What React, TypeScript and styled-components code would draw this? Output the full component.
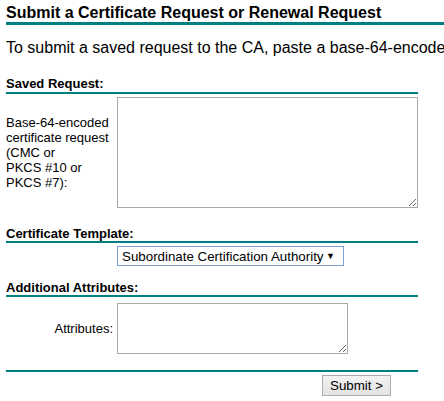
import React from "react";
import styled, { createGlobalStyle } from "styled-components";

const Global = createGlobalStyle`
  html, body {
    margin: 0;
    padding: 0;
    overflow: hidden;
    background: #ffffff;
  }
  body {
    font-family: "Liberation Sans", Arial, sans-serif;
    color: #000000;
  }
`;

const Page = styled.div`
  display: flex;
  flex-direction: column;
  padding: 4px 0 0 6px;
`;

const Title = styled.h1`
  margin: 0;
  font-size: 16px;
  line-height: 18px;
  font-weight: bold;
  white-space: nowrap;
  border-bottom: 3px solid #008080;
`;

const Intro = styled.p`
  margin: 14px 0 0 0;
  font-size: 16px;
  line-height: 18px;
  white-space: nowrap;
`;

const Form = styled.form`
  display: flex;
  flex-direction: column;
  width: 412px;
`;

const SectionHead = styled.div<{ $top: number }>`
  margin-top: ${(p) => p.$top}px;
  font-size: 13px;
  line-height: 15px;
  font-weight: bold;
  padding-bottom: ${(p) => (p.$top > 18 ? 1 : 0)}px;
  border-bottom: 2px solid #008080;
`;

const Row = styled.div<{ $top: number }>`
  display: grid;
  grid-template-columns: 111px auto;
  align-items: center;
  margin-top: ${(p) => p.$top}px;
`;

const Label = styled.div<{ $right?: boolean }>`
  font-size: 13px;
  line-height: 15px;
  padding-right: 4px;
  text-align: ${(p) => (p.$right ? "right" : "left")};
`;

const Area = styled.textarea<{ $w: number; $h: number }>`
  box-sizing: border-box;
  width: ${(p) => p.$w}px;
  height: ${(p) => p.$h}px;
  margin: 0;
  border: 1px solid #a9a9a9;
  background: #ffffff;
  font-family: "Liberation Mono", monospace;
  font-size: 13px;
  padding: 2px;
  display: block;
`;

const SelectBox = styled.div`
  box-sizing: border-box;
  width: 227px;
  height: 20px;
  border: 1px solid #7f9fd9;
  background: #ffffff;
  display: flex;
  align-items: center;
  justify-content: space-between;
  padding: 0 8px 0 4px;
  font-size: 13.33px;
`;

const Arrow = styled.span`
  font-size: 9px;
  line-height: 1;
`;

const Rule = styled.div`
  margin-top: 16px;
  border-bottom: 2px solid #008080;
`;

const Footer = styled.div`
  display: flex;
  justify-content: flex-end;
  padding-right: 27px;
  margin-top: 3px;
`;

const Button = styled.button`
  box-sizing: border-box;
  width: 69px;
  height: 21px;
  font-family: "Liberation Sans", Arial, sans-serif;
  font-size: 13.33px;
  color: #000000;
  background: linear-gradient(#f2f2f2, #e3e3e3);
  border: 1px solid #adadad;
  border-radius: 0;
  padding: 0;
`;

export default function App() {
  return (
    <>
      <Global />
      <Page>
        <Title>Submit a Certificate Request or Renewal Request</Title>
        <Intro>
          To submit a saved request to the CA, paste a base-64-encoded CMC or PKCS #10 certificate
          request or PKCS #7 renewal request generated by an external source (such as a Web server)
          in the Saved Request box.
        </Intro>
        <Form onSubmit={(e) => e.preventDefault()}>
          <SectionHead $top={19}>Saved Request:</SectionHead>
          <Row $top={3}>
            <Label>
              Base-64-encoded
              <br />
              certificate request
              <br />
              (CMC or
              <br />
              PKCS #10 or
              <br />
              PKCS #7):
            </Label>
            <Area $w={301} $h={111} />
          </Row>
          <SectionHead $top={18}>Certificate Template:</SectionHead>
          <Row $top={3}>
            <Label />
            <SelectBox>
              <span>Subordinate Certification Authority</span>
              <Arrow>▼</Arrow>
            </SelectBox>
          </Row>
          <SectionHead $top={14}>Additional Attributes:</SectionHead>
          <Row $top={6}>
            <Label $right>Attributes:</Label>
            <Area $w={231} $h={51} />
          </Row>
          <Rule />
          <Footer>
            <Button type="submit">Submit &gt;</Button>
          </Footer>
        </Form>
      </Page>
    </>
  );
}
